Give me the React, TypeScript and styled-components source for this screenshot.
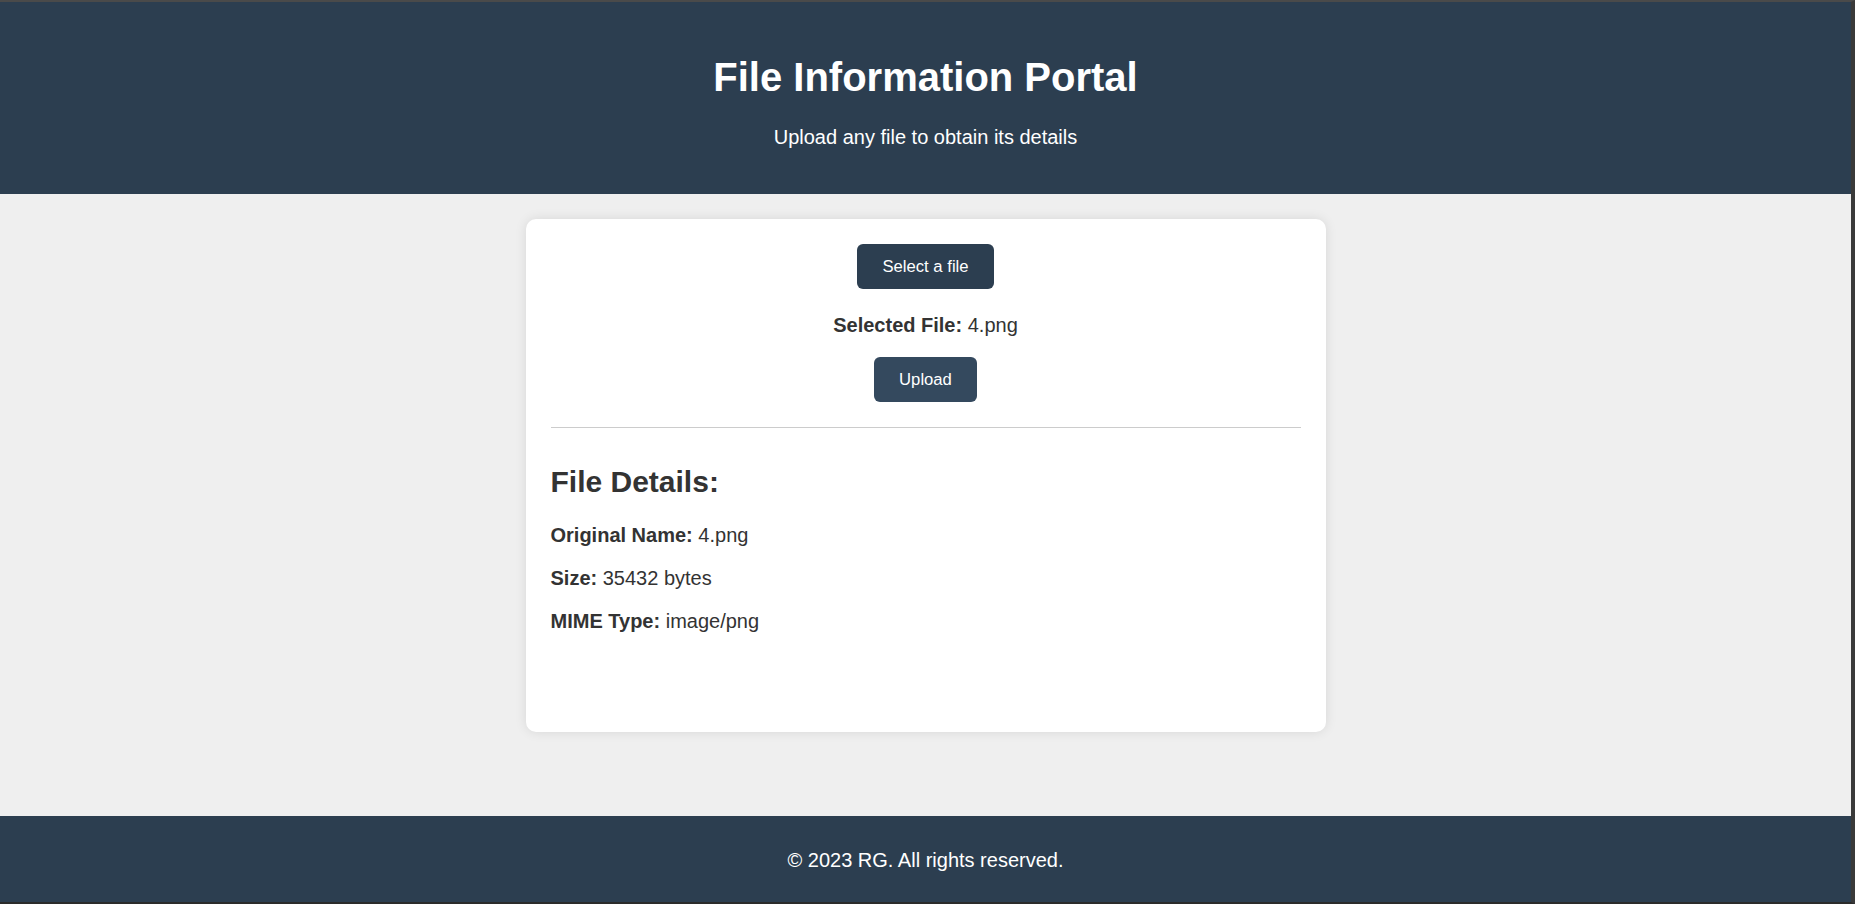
import React from "react";
import styled, { createGlobalStyle } from "styled-components";

const GlobalStyle = createGlobalStyle`
  html, body {
    margin: 0;
    padding: 0;
    background: #3a3a3a;
  }
  * { box-sizing: border-box; }
  body {
    font-family: "Liberation Sans", Arial, sans-serif;
  }
`;

const Frame = styled.div`
  height: 100vh;
  border-top: 2px solid #4a4a4a;
  border-right: 4px solid #3a3a3a;
  border-bottom: 2px solid #2b2b2b;
  display: flex;
  flex-direction: column;
  background: #efefef;
`;

const Header = styled.header`
  background: #2c3e50;
  color: #ffffff;
  text-align: center;
  padding: 52px 0 45px;
`;

const Title = styled.h1`
  margin: 0;
  font-size: 40px;
  line-height: 46px;
  font-weight: 700;
`;

const Subtitle = styled.p`
  margin: 26px 0 0;
  font-size: 20px;
  line-height: 23px;
`;

const Main = styled.main`
  flex: 1;
  display: flex;
  justify-content: center;
  align-items: flex-start;
  padding-top: 25px;
`;

const Card = styled.section`
  width: 800px;
  min-height: 513px;
  background: #ffffff;
  border-radius: 10px;
  box-shadow: 0 0 12px rgba(0, 0, 0, 0.1);
  padding: 25px;
  color: #333333;
  display: flex;
  flex-direction: column;
`;

const UploadArea = styled.div`
  display: flex;
  flex-direction: column;
  align-items: center;
`;

const Button = styled.button<{ $tone?: "dark" | "slate"; $gap?: number }>`
  font-family: "Liberation Sans", Arial, sans-serif;
  font-size: 16.67px;
  line-height: 20px;
  color: #ffffff;
  background: ${(p) => (p.$tone === "slate" ? "#34495e" : "#2c3e50")};
  border: none;
  border-radius: 6px;
  padding: 12.5px 25px;
  margin-top: ${(p) => p.$gap ?? 0}px;
  cursor: pointer;
`;

const SelectedLine = styled.p`
  margin: 24.5px 0 0;
  font-size: 20px;
  line-height: 23px;
`;

const Divider = styled.hr`
  width: 100%;
  height: 0;
  border: none;
  border-top: 1px solid #cccccc;
  margin: 25px 0 0;
`;

const DetailsTitle = styled.h2`
  margin: 36px 0 0;
  font-size: 30px;
  line-height: 35px;
  font-weight: 700;
`;

const DetailsList = styled.div`
  margin-top: 25px;
  display: flex;
  flex-direction: column;
  gap: 20px;
`;

const DetailRow = styled.p`
  margin: 0;
  font-size: 20px;
  line-height: 23px;
`;

const Footer = styled.footer`
  background: #2c3e50;
  color: #ffffff;
  text-align: center;
  padding: 32.5px 0 30.5px;
`;

const FooterText = styled.p`
  margin: 0;
  font-size: 20px;
  line-height: 23px;
`;

export default function App() {
  return (
    <>
      <GlobalStyle />
      <Frame>
        <Header>
          <Title>File Information Portal</Title>
          <Subtitle>Upload any file to obtain its details</Subtitle>
        </Header>
        <Main>
          <Card>
            <UploadArea>
              <Button>Select a file</Button>
              <SelectedLine>
                <strong>Selected File:</strong> 4.png
              </SelectedLine>
              <Button $tone="slate" $gap={20.5}>
                Upload
              </Button>
            </UploadArea>
            <Divider />
            <DetailsTitle>File Details:</DetailsTitle>
            <DetailsList>
              <DetailRow>
                <strong>Original Name:</strong> 4.png
              </DetailRow>
              <DetailRow>
                <strong>Size:</strong> 35432 bytes
              </DetailRow>
              <DetailRow>
                <strong>MIME Type:</strong> image/png
              </DetailRow>
            </DetailsList>
          </Card>
        </Main>
        <Footer>
          <FooterText>© 2023 RG. All rights reserved.</FooterText>
        </Footer>
      </Frame>
    </>
  );
}
